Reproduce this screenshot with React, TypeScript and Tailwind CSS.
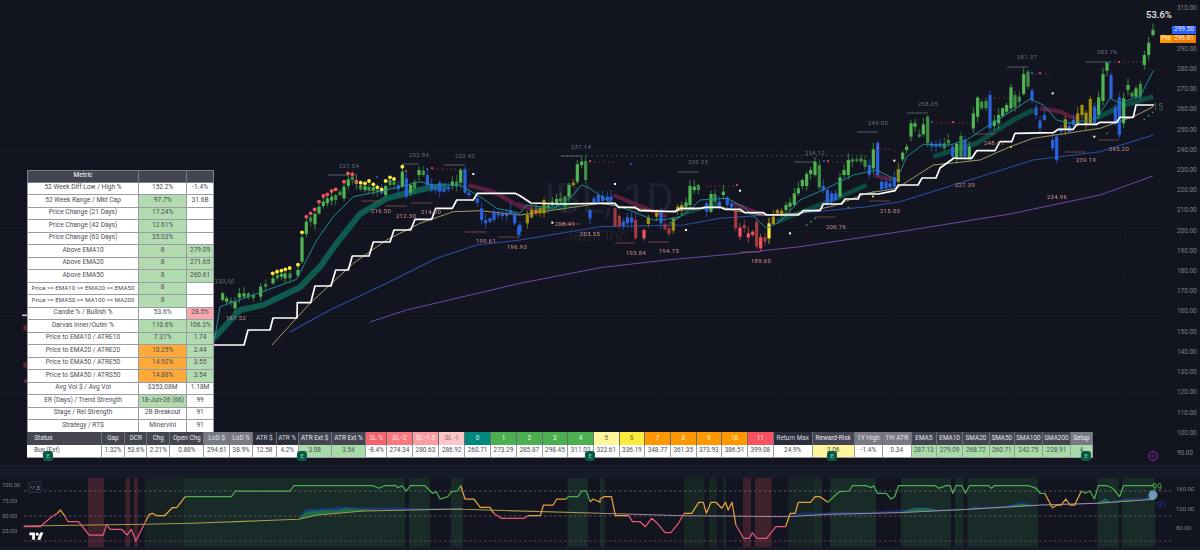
import React from "react";
import { Zap } from "lucide-react";

const P = (ox: number, oy: number, s: string, sx = 3, sy = 3) =>
  s.trim().split(/\s+/).map((p) => {
    const [x, y] = p.split(",").map(Number);
    return `${(ox + x / sx).toFixed(1)},${(oy + y / sy).toFixed(1)}`;
  }).join(" ");

const COL: Record<string, string> = {
  g: "#4fb553", d: "#3f9043", b: "#2b63de", r: "#f7525f", m: "#a33b42", o: "#a3900f", y: "#ffeb3b", a: "#e0702a",
};

type C = { x: number; t: number; b: number; c: string };
const parseC = (ox: number, oy: number, s: string): C[] =>
  s.trim().split(/\s+/).map((p) => {
    const [x, t, b, c] = p.split(",");
    return { x: ox + +x / 3, t: oy + +t / 3, b: oy + +b / 3, c };
  });

const candles: C[] = [
  ...parseC(220, 130, `8,490,510,g 20,505,515,g 33,512,518,d 45,515,535,g 58,490,503,g 72,490,500,g 85,490,502,d 100,495,505,d 122,470,500,g 137,462,470,d 159,445,460,g 172,435,445,d 184,432,440,g 195,430,445,g 210,430,445,d 234,420,437,g 246,322,395,g 259,275,312,g 272,262,275,d 285,252,283,g 297,230,250,g 310,215,228,g 322,205,220,g 335,200,212,g 347,195,210,d 360,185,195,d 372,170,205,g 385,148,168,g 397,140,150,d 409,150,162,g 422,165,178,d 435,168,180,g 447,170,182,d 460,172,182,g 472,180,185,d 485,182,190,b 497,168,195,g 510,150,165,d 522,155,165,d 535,165,178,b 547,125,170,g 559,145,200,b 572,165,188,g 584,155,175,d 597,120,135,g 610,122,135,d 622,135,165,b 635,165,178,b 647,170,178,b 659,158,185,b 672,175,185,b 685,170,178,b 697,155,168,g 710,155,170,d 722,120,158,g 735,118,188,b 747,188,195,b 772,205,218,b 785,235,270,b 797,270,280,b 810,265,275,b 822,245,270,b 835,250,256,b 847,252,258,b 860,252,258,b 872,240,250,b 884,250,280,b 896,290,315,b`),
  ...parseC(520, 130, `0,285,305,b 22,255,280,o 35,240,262,o 48,240,250,a 60,235,250,o 72,210,250,o 85,225,235,d 97,215,225,g 110,207,220,g 122,205,215,d 135,200,230,d 147,165,200,g 160,158,165,o 172,103,155,g 185,95,105,g 197,93,150,d 210,240,265,b 222,205,218,b 235,195,215,b`),
  ...parseC(600, 100, `8,287,303,b 22,290,300,b 33,290,302,b 45,325,378,m 58,348,378,m 70,365,378,b 82,352,370,b 95,352,368,b 107,360,415,m 132,390,415,r 145,352,372,o 170,338,350,o 183,335,370,b 195,373,388,m 207,385,402,m 220,355,392,o 233,320,332,o 245,315,330,o 258,307,320,g 270,258,315,g 283,260,270,g 295,255,270,d 320,310,335,b 333,282,335,g 345,282,305,d 358,305,318,b 370,275,285,g 382,292,315,b 395,310,322,b 407,330,385,m 420,383,410,r 433,375,385,m 445,400,412,r 458,395,405,r 470,365,440,m 482,412,445,r 495,412,425,m 507,370,415,y 520,350,372,o 532,330,340,o 545,332,342,o 558,315,330,g 570,308,320,g 583,280,315,g 595,265,280,g 607,240,258,g 620,222,258,g 632,210,222,g 645,185,225,g 658,195,262,d 670,258,270,b 682,270,308,b 695,280,305,b 707,280,300,b 720,232,290,g 732,210,225,g 745,180,225,g 757,178,185,d 770,178,183,d 783,175,185,d 795,180,200,d 808,195,225,b 820,148,205,g 833,128,225,b 845,245,268,b 858,245,265,b 870,250,262,b 883,232,260,b 895,208,245,o`),
  ...parseC(900, 0, `8,458,478,g 20,440,450,g 33,370,410,g 45,370,380,g 58,403,410,d 70,373,403,g 83,350,430,d 95,430,440,b 108,433,440,b 120,430,440,b 133,430,445,d 145,420,430,d 158,440,470,b 170,432,475,g 183,408,470,d 195,420,470,b 208,440,475,g 220,340,385,g 233,293,350,g 245,305,325,d 258,303,325,d 270,285,385,b 283,362,378,g 296,345,370,g 308,325,348,g 320,315,335,g 333,262,325,g 345,285,322,d 358,290,305,d 371,222,282,g 384,215,260,d 396,272,300,b 408,322,345,b 420,362,385,b 433,345,360,b 458,420,445,b 470,410,480,b 483,385,395,b 496,358,390,o 508,378,395,b 520,360,375,b 533,340,370,o 546,315,345,o 558,338,375,o 571,297,370,o 584,320,370,b 596,292,345,g 609,222,303,g 621,188,212,g 633,225,295,b 646,322,370,b 658,292,405,b 671,295,370,g 684,255,270,g 696,278,290,d 708,265,290,g 721,252,290,d 733,165,195,g 746,128,165,g 759,90,105,g`),
];

const dots = (ox: number, oy: number, s: string) =>
  s.trim().split(/\s+/).map((p) => {
    const [x, y] = p.split(",").map(Number);
    return [ox + x / 3, oy + y / 3];
  });

const yellowDots = dots(220, 130, "158,430 171,425 184,422 196,418 209,414 234,404 246,307 422,158 435,160 447,153 460,163 472,172 485,178 497,153 510,142 522,147 547,110");
const redDots = dots(220, 130, "259,260 272,250 284,238 297,215 310,198 322,193 335,183 347,178 372,155 384,130 397,133 409,155");
const whiteDots = [...dots(220, 130, "760,132"), ...dots(600, 100, "45,252 258,390 420,272 570,400 883,182"), ...dots(520, 130, "285,162 97,278"), ...dots(900, 0, "458,280 583,410")];
const greenDots = [...dots(900, 0, "733,358 746,347 758,337 621,400"), ...dots(600, 100, "620,375 633,365 645,355 745,322 820,275")];

const grayLevels = [[328, 175, 348], [402, 164, 419], [444, 165, 465], [561, 156, 581], [678, 172, 699], [794, 162, 815], [857, 132, 878], [907, 113, 928], [1007, 67, 1028], [1086, 62, 1107]];
const pinkLevels = [[361, 201, 382], [386, 206, 407], [411, 203, 432], [465, 232, 486], [498, 237, 519], [560, 224, 581], [615, 243, 635], [648, 242, 669], [740, 252, 760], [815, 217, 836], [869, 201, 890], [974, 134, 995], [1065, 152, 1086], [1098, 140, 1119]];
const redDash = [[433, 169, 473], [590, 162, 613], [706, 186, 737], [828, 162, 853], [880, 149, 893], [936, 123, 972], [990, 98, 1010], [1032, 74, 1050], [1110, 62, 1142]];

const topLabels: [string, number, number][] = [["227.54", 349, 168], ["232.84", 419, 157], ["232.42", 465, 158], ["237.14", 581, 149], ["229.23", 698, 164], ["234.12", 815, 155], ["249.00", 878, 125], ["258.05", 928, 106], ["281.37", 1027, 59], ["283.76", 1107, 54], ["120.90", 224.5, 283]];
const lowLabels: [string, number, number][] = [["161.52", 236, 320], ["216.50", 381, 213], ["212.30", 406, 218], ["214.00", 431, 214], ["199.61", 486, 243], ["196.93", 517, 249], ["208.41", 565, 226], ["203.55", 590, 236], ["193.84", 636, 255], ["194.75", 669, 253], ["189.60", 761, 263], ["206.76", 836, 229], ["215.00", 890, 213], ["248.41", 994, 145], ["227.39", 965, 187], ["234.96", 1057, 199], ["239.19", 1086, 162], ["245.20", 1119, 151]];

const white = "214,345 244,345 248,330 270,330 273,318 297,318 " +
  P(220, 130, "232,518 272,518 285,468 333,468 347,420 385,420 397,378 447,378 460,336 510,336 522,300 572,300 585,268 635,268 647,235 697,235 710,210 760,210 772,190 885,190 900,197") +
  " 531,203 560,204 " + P(600, 100, "0,310 45,310 55,322 105,322 120,332 225,335 240,325 300,325 315,322 360,322 375,328 420,328 435,338 490,338 500,345 595,345 610,332 660,332 670,312 725,312 735,297 775,297 780,282 835,282 885,272 895,255 900,255") +
  " 918,185 922,178 936,178 940,168 954,158 " + P(900, 0, "170,475 215,475 230,452 285,452 300,425 335,425 345,400 460,398 475,388 520,388 530,373 590,373 600,367 650,367 660,352 700,352 708,315 762,315");

const teal = "214,343 " + P(220, 130, "0,530 100,495 230,448 290,330 340,260 400,200 500,180 600,155 640,165 720,165 780,200 830,235 900,250") + " " +
  P(520, 130, "20,225 100,235 150,205 185,165 210,175 250,205 300,230 340,245 400,270 440,268 480,260") + " " +
  P(600, 100, "210,370 250,345 300,300 380,295 430,320 500,385 540,365 600,300 680,265 760,225 830,210 890,240") + " " +
  P(900, 0, "20,470 70,433 150,435 200,420 265,377 340,330 390,297 430,315 470,360 510,370 590,355 630,295 660,310 700,295 720,290 760,212");

const yellowLine = "272,345 " + P(220, 130, "270,520 400,400 500,330 600,280 700,245 780,242 900,255") + " " +
  P(600, 100, "0,310 100,325 200,335 360,320 420,335 490,345 600,340 700,318 800,280 890,265") + " " +
  P(900, 0, "100,495 240,480 330,440 400,415 500,400 600,385 700,350 760,320");
const blueLine = "290,332 " + P(220, 130, "330,540 500,460 650,385 770,345 900,330") + " " +
  P(600, 100, "0,380 100,378 250,375 360,355 500,345 600,340 700,330 800,320 900,305") + " " +
  P(900, 0, "400,480 600,455 760,405");
const purpleLine = "370,322 " + P(220, 130, "560,540 900,460") + " " + P(600, 100, "0,503 200,480 400,462 600,440 800,410 900,395") + " 1010,214 1100,195 1153,176";

const prices = [310, 300, 290, 280, 270, 260, 250, 240, 230, 220, 210, 200, 190, 180, 170, 160, 150, 140, 130, 120, 110, 100, 90];

const metricRows: [string, string, string, string?, string?][] = [
  ["52 Week Diff Low / High %", "152.2%", "-1.4%"],
  ["52 Week Range / Mkt Cap", "97.7%", "31.6B", "bg-[#b2dcb0]"],
  ["Price Change (21 Days)", "17.24%", "", "bg-[#b2dcb0]"],
  ["Price Change (42 Days)", "12.61%", "", "bg-[#b2dcb0]"],
  ["Price Change (63 Days)", "35.03%", "", "bg-[#b2dcb0]"],
  ["Above EMA10", "8", "279.09", "bg-[#b2dcb0]", "bg-[#b2dcb0]"],
  ["Above EMA20", "8", "271.65", "bg-[#b2dcb0]", "bg-[#b2dcb0]"],
  ["Above EMA50", "8", "260.61", "bg-[#b2dcb0]", "bg-[#b2dcb0]"],
  ["Price >= EMA10 >= EMA20 >= EMA50", "8", "", "bg-[#b2dcb0]"],
  ["Price >= EMA50 >= MA100 >= MA200", "8", "", "bg-[#b2dcb0]"],
  ["Candle % / Bullish %", "53.6%", "28.5%", "", "bg-[#f7a9ad]"],
  ["Darvas Inner/Outer %", "110.6%", "106.3%", "bg-[#b2dcb0]", "bg-[#b2dcb0]"],
  ["Price to EMA10 / ATRE10", "7.31%", "1.74", "bg-[#b2dcb0]", "bg-[#b2dcb0]"],
  ["Price to EMA20 / ATRE20", "10.25%", "2.44", "bg-[#ffa93a]", "bg-[#b2dcb0]"],
  ["Price to EMA50 / ATRE50", "14.92%", "3.55", "bg-[#ffa93a]", "bg-[#b2dcb0]"],
  ["Price to SMA50 / ATRS50", "14.88%", "3.54", "bg-[#ffa93a]", "bg-[#b2dcb0]"],
  ["Avg Vol $ / Avg Vol", "$353.08M", "1.18M"],
  ["ER (Days) / Trend Strength", "18-Jun-26 (66)", "99", "bg-[#b2dcb0]"],
  ["Stage / Rel Strength", "2B Breakout", "91"],
  ["Strategy / RTS", "Minervini", "91"],
];

const D = "bg-[#434651] text-[#e6e7ea]";
const K = "bg-[#2a2e39] text-[#d8dae0]";
const L = "bg-[#787b86] text-[#e6e7ea]";
const G = "bg-[#4caf50] text-[#e9f5e9]";
const O = "bg-[#ff9800] text-[#fff2dc]";
const V = "bg-[#a9dba9]";
const bottomCols: { h: string; v: string; w: string; hc: string; vc?: string; left?: boolean }[] = [
  { h: "Status", v: "Buy (Ext)", w: "w-[74.4px]", hc: D, left: true },
  { h: "Gap", v: "1.32%", w: "w-[23.6px]", hc: D },
  { h: "DCR", v: "53.6%", w: "w-[22px]", hc: D },
  { h: "Chg", v: "2.21%", w: "w-[23px]", hc: D },
  { h: "Open Chg", v: "0.88%", w: "w-[34px]", hc: D },
  { h: "LoD $", v: "294.61", w: "w-[26px]", hc: L },
  { h: "LoD %", v: "38.9%", w: "w-[22.7px]", hc: L },
  { h: "ATR $", v: "12.58", w: "w-[23.7px]", hc: K },
  { h: "ATR %", v: "4.2%", w: "w-[22px]", hc: K },
  { h: "ATR Ext $", v: "3.08", w: "w-[33px]", hc: D, vc: V },
  { h: "ATR Ext %", v: "3.54", w: "w-[34.6px]", hc: D, vc: V },
  { h: "SL %", v: "-8.4%", w: "w-[21px]", hc: "bg-[#f7626c] text-[#ffe3e5]" },
  { h: "SL -2", v: "274.34", w: "w-[25.4px]", hc: "bg-[#f9797f] text-[#ffe3e5]" },
  { h: "SL -1.5", v: "280.63", w: "w-[26.6px]", hc: "bg-[#fa9ea2] text-[#fff0f0]" },
  { h: "SL -1", v: "286.92", w: "w-[26px]", hc: "bg-[#fcc5c8] text-[#8a6a6d]" },
  { h: "0", v: "260.71", w: "w-[25.7px]", hc: "bg-[#00897b] text-[#dff3f0]" },
  { h: "1", v: "273.29", w: "w-[26px]", hc: G },
  { h: "2", v: "285.87", w: "w-[25.7px]", hc: G },
  { h: "3", v: "298.45", w: "w-[25.6px]", hc: G },
  { h: "4", v: "311.03", w: "w-[25.7px]", hc: G },
  { h: "5", v: "323.61", w: "w-[25.7px]", hc: "bg-[#fff59d] text-[#6b6630]" },
  { h: "6", v: "336.19", w: "w-[25.6px]", hc: "bg-[#ffeb3b] text-[#6b6318]" },
  { h: "7", v: "348.77", w: "w-[25.7px]", hc: O },
  { h: "8", v: "361.35", w: "w-[25.7px]", hc: O },
  { h: "9", v: "373.93", w: "w-[25.6px]", hc: O },
  { h: "10", v: "386.51", w: "w-[25.7px]", hc: O },
  { h: "11", v: "399.08", w: "w-[26px]", hc: "bg-[#f7525f] text-[#ffe3e5]" },
  { h: "Return Max", v: "24.9%", w: "w-[38.7px]", hc: K },
  { h: "Reward-Risk", v: "3.06", w: "w-[42.3px]", hc: D, vc: "bg-[#fff59d]" },
  { h: "1Y High", v: "-1.4%", w: "w-[28.3px]", hc: L },
  { h: "1Yr ATR", v: "0.34", w: "w-[28.4px]", hc: L },
  { h: "EMA5", v: "287.13", w: "w-[25.6px]", hc: D, vc: V },
  { h: "EMA10", v: "279.09", w: "w-[26px]", hc: D, vc: V },
  { h: "SMA20", v: "268.72", w: "w-[26.7px]", hc: D, vc: V },
  { h: "SMA50", v: "260.71", w: "w-[25px]", hc: D, vc: V },
  { h: "SMA100", v: "242.75", w: "w-[28.3px]", hc: D, vc: V },
  { h: "SMA200", v: "228.91", w: "w-[27.7px]", hc: D, vc: V },
  { h: "Setup", v: "4", w: "w-[22.3px]", hc: L, vc: V },
];

const greenZones = [[145, 184, 0.1], [184, 405, 0.17], [409, 430, 0.17], [451, 463, 0.17], [567.5, 588, 0.17], [600, 604.6, 0.17], [684, 704.5, 0.12], [709, 717, 0.12], [723, 726, 0.12], [788, 813.5, 0.1], [813.5, 822, 0.17], [830, 876, 0.17], [901, 951, 0.17], [955, 963.5, 0.17], [967.4, 1038, 0.17], [1097.5, 1118.5, 0.17], [1122, 1155, 0.17]];
const redZones = [[88, 104], [125.5, 130], [134, 138], [743, 751], [755, 771.5]];

const I0 = (s: string) => P(0, 465, s, 2.613, 3);
const I1 = (s: string) => P(600, 465, s, 2.613, 3);
const segs: [string, string][] = [
  ["#e8587a", I0("62,185 105,185 135,155 150,145")],
  ["#e9a23b", I0("150,145 158,135 170,155")],
  ["#e8587a", I0("170,155 178,170 205,170 233,210 270,210 278,178 288,193 318,193 332,210 343,193 355,228 380,170")],
  ["#e9a23b", I0("380,170 390,148 398,145 410,152 430,152 450,128 462,128 484,95")],
  ["#4caf50", I0("484,95 605,95 615,78 758,78 768,62 975,62 990,70 1005,62 1035,62 1040,68 1050,62 1062,78 1072,62 1110,62 1130,85 1140,80 1150,102 1170,95 1180,80 1195,78 1204,62")],
  ["#e9a23b", I0("1204,62 1215,102 1238,102 1255,127 1280,127 1290,145")],
  ["#e8587a", I0("1290,145 1310,160 1370,160 1380,152")],
  ["#e9a23b", I0("1380,152 1412,152 1420,120 1445,120 1455,102 1480,102")],
  ["#4caf50", I0("1480,102 1485,95 1510,95 1520,78 1532,78 1542,110")],
  ["#e9a23b", I0("1542,110 1550,102 1568,112") + " " + I1("0,102 10,95 30,95 40,152 75,152")],
  ["#e8587a", I1("75,152 85,170 105,170 118,185 135,160 150,175 170,203 185,203 205,175 220,145")],
  ["#e9a23b", I1("220,145 240,145 258,112 270,112 278,145 290,112 303,112 318,130 328,112 335,135 345,112 355,180")],
  ["#e8587a", I1("355,180 375,220 390,220 398,203 410,220 435,220 460,185 485,185")],
  ["#e9a23b", I1("485,185 497,145 510,145 518,112 550,112 562,95 575,95 595,112")],
  ["#4caf50", I1("595,112 625,80 650,78 660,62 695,62 708,68 715,62 725,85 748,85 760,102 770,95 780,62 875,62 885,70 905,62 915,62 922,85 930,62 945,62 955,85 965,62 1015,62 1023,70 1030,62 1120,62 1140,70 1150,85 1162,85")],
  ["#e9a23b", I1("1162,85 1182,128 1195,120 1205,120 1217,102 1228,120 1240,120 1258,78")],
  ["#4caf50", I1("1258,78 1268,85 1280,78 1292,102 1302,62 1325,62 1340,70 1358,95 1368,62 1448,62")],
];

export default function App() {
  return (
    <div className="flex h-[550px] w-[1200px] flex-col overflow-hidden bg-[#12151f] font-['Roboto','Liberation_Sans',sans-serif]">
      {/* main price pane */}
      <div className="relative flex h-[465px] w-full">
        <svg className="absolute inset-0 h-[465px] w-[1200px] blur-[0.3px]" viewBox="0 0 1200 465">
          {prices.filter((p) => p % 20 === 0).map((p) => {
            const y = 9 + (310 - p) * 2.023;
            return <line key={p} x1="0" x2="1165" y1={y} y2={y} stroke="#181c28" strokeWidth="1" />;
          })}
          {[310, 430, 545, 660, 780, 895, 1010, 1125].map((x) => (
            <line key={x} x1={x} x2={x} y1="0" y2="465" stroke="#171b26" strokeWidth="1" />
          ))}
          <text x="603" y="213" textAnchor="middle" fontSize="42" fill="#1f2330" fontFamily="Roboto, sans-serif">JBL, 1D</text>
          <text x="598" y="241" textAnchor="middle" fontSize="17" fill="#1f2330" fontFamily="Roboto, sans-serif">Jabil Inc.</text>

          {/* ribbons */}
          <polyline fill="none" stroke="#0e5a4e" strokeWidth="6" points={"214,338 " + P(220, 130, "60,540 130,525 240,472 300,410 350,340 420,252 500,205 620,175 680,168")} />
          <polyline fill="none" stroke="#5a1f40" strokeWidth="4" points={P(220, 130, "745,165 820,185 900,230") + " " + P(520, 130, "0,225 40,240")} />
          <polyline fill="none" stroke="#0f4540" strokeWidth="4" points={P(520, 130, "40,240 120,230 170,220")} />
          <polyline fill="none" stroke="#5a1f40" strokeWidth="4" points={P(600, 100, "40,285 100,310 200,350")} />
          <polyline fill="none" stroke="#0f4540" strokeWidth="3" points={P(600, 100, "240,345 310,325 360,310")} />
          <polyline fill="none" stroke="#5a1f40" strokeWidth="4" points={P(600, 100, "400,310 490,345")} />
          <polyline fill="none" stroke="#0d4a42" strokeWidth="4.5" points={P(600, 100, "530,365 620,330 720,290 800,255")} />
          <polyline fill="none" stroke="#5a1f40" strokeWidth="4" points={P(600, 100, "820,225 880,240")} />
          <polyline fill="none" stroke="#0d4a42" strokeWidth="5" points={P(900, 0, "100,470 230,430 340,360 400,330")} />
          <polyline fill="none" stroke="#5a1f40" strokeWidth="4" points={P(900, 0, "420,325 480,335 530,358")} />
          <polyline fill="none" stroke="#0d4a42" strokeWidth="5" points={P(900, 0, "590,355 660,320 760,290")} />

          {/* moving averages */}
          <polyline fill="none" stroke="#6a4aa8" strokeWidth="1" points={purpleLine} />
          <polyline fill="none" stroke="#2a4fa8" strokeWidth="1.1" points={blueLine} />
          <polyline fill="none" stroke="#b3a866" strokeWidth="0.9" points={yellowLine} />

          {/* level lines */}
          <line x1="561" x2="870" y1="155.7" y2="155.7" stroke="#5a5e68" strokeWidth="0.7" strokeDasharray="2 3" />
          <line x1="215" x2="235" y1="283.5" y2="283.5" stroke="#5a5e68" strokeWidth="0.7" strokeDasharray="2 3" />
          {grayLevels.map(([a, y, b]) => <line key={a} x1={a} x2={b} y1={y} y2={y} stroke="#6b6f78" strokeWidth="0.8" />)}
          {pinkLevels.map(([a, y, b]) => <line key={a} x1={a} x2={b} y1={y} y2={y} stroke="#8a5258" strokeWidth="0.8" />)}
          {redDash.map(([a, y, b]) => <line key={a} x1={a} x2={b} y1={y} y2={y} stroke="#b33c48" strokeWidth="0.9" strokeDasharray="1.2 3.2" />)}

          {/* candles */}
          {candles.map((c, i) => {
            const up = 1.5 + ((i * 7) % 6);
            const dn = 1.5 + ((i * 11) % 5);
            return (
              <g key={i}>
                <line x1={c.x} x2={c.x} y1={c.t - up} y2={c.b + dn} stroke={COL[c.c]} strokeWidth="0.7" />
                <rect x={c.x - 1.6} y={c.t} width="3.2" height={Math.max(c.b - c.t, 1)} fill={COL[c.c]} />
              </g>
            );
          })}
          <polyline fill="none" stroke="#1f8a96" strokeWidth="1" points={teal} />
          <polyline fill="none" stroke="#ffffff" strokeWidth="1.7" points={white} strokeLinejoin="round" />

          {/* markers */}
          {yellowDots.map(([x, y], i) => <circle key={i} cx={x} cy={y} r="1.9" fill="#ffeb3b" />)}
          {redDots.map(([x, y], i) => <circle key={i} cx={x} cy={y} r="1.9" fill="#f7525f" />)}
          {whiteDots.map(([x, y], i) => <rect key={i} x={x - 1} y={y - 1} width="2" height="2" fill="#ffffff" />)}
          {greenDots.map(([x, y], i) => <circle key={i} cx={x} cy={y} r="0.9" fill="#2e9e5b" />)}
          <circle cx="873" cy="196.5" r="1" fill="#ffeb3b" />
          <circle cx="1011" cy="147" r="0.9" fill="#ffeb3b" />
          {[[377, 177], [427, 169], [932, 122], [631, 164], [990, 97], [1032, 73], [1110, 62], [824, 161]].map(([x, y], i) => (
            <circle key={i} cx={x} cy={y} r="1" fill="#2b63de" />
          ))}
          {[[406, 171], [432, 168], [590, 161], [737, 185], [828, 161], [878, 148], [953, 122], [1040, 73], [1119, 62]].map(([x, y], i) => (
            <circle key={i} cx={x} cy={y} r="1" fill="#f7525f" />
          ))}
          {/* marks at the left edge */}
          <rect x="22" y="314.5" width="5" height="1.6" fill="#c9ccd2" />
          <circle cx="26" cy="328" r="3" fill="#5c2233" />
          <circle cx="26" cy="365" r="3" fill="#5c2233" />
          <circle cx="26" cy="381" r="2" fill="#6a2a3a" />

          {topLabels.map(([t, x, y]) => <text key={t} x={x} y={y} textAnchor="middle" fontSize="6" letterSpacing="0.3" fill="#6e727c">{t}</text>)}
          {lowLabels.map(([t, x, y]) => <text key={t} x={x} y={y} textAnchor="middle" fontSize="6" letterSpacing="0.3" fill="#d98f92">{t}</text>)}
          <text x="1158" y="110" textAnchor="middle" fontSize="9" fill="#4c6b4c">15</text>
        </svg>

        {/* metric table */}
        <div className="absolute left-[27.3px] top-[170px] z-10 flex w-[186.4px] flex-col text-[6.6px] text-[#4a4d55]">
          <div className="flex h-[12.7px] border border-[#7b7e86] bg-[#434651] font-medium text-[#dfe0e4]">
            <div className="flex w-[110.5px] items-center justify-center border-r border-[#7b7e86]">Metric</div>
            <div className="w-[48.7px] border-r border-[#7b7e86]"></div>
            <div className="flex-1"></div>
          </div>
          {metricRows.map(([a, b, c, bc, cc]) => (
            <div key={a} className="flex h-[12.5px] border-b border-l border-r border-[#9a9ca3] bg-white">
              <div className={`flex w-[110.5px] items-center justify-center whitespace-nowrap border-r border-[#9a9ca3] ${a.includes(">=") ? "text-[6.2px]" : ""}`}>{a}</div>
              <div className={`flex w-[48.7px] items-center justify-center whitespace-nowrap border-r border-[#9a9ca3] ${bc ?? ""}`}>{b}</div>
              <div className={`flex flex-1 items-center justify-center whitespace-nowrap ${cc ?? ""}`}>{c}</div>
            </div>
          ))}
        </div>

        {/* bottom stats table */}
        <div className="absolute left-[27.3px] top-[432px] z-10 flex flex-col text-[6.4px]">
          <div className="flex h-[13.4px]">
            {bottomCols.map((c) => (
              <div key={c.h} className={`flex ${c.w} shrink-0 items-center whitespace-nowrap border-r border-[#6b6e77] ${c.left ? "justify-start pl-[7px]" : "justify-center"} ${c.hc}`}>{c.h}</div>
            ))}
          </div>
          <div className="flex h-[12.6px] text-[#4a4d55]">
            {bottomCols.map((c) => (
              <div key={c.h} className={`flex ${c.w} shrink-0 items-center whitespace-nowrap border-r border-b border-[#9a9ca3] ${c.left ? "justify-start pl-[7px]" : "justify-center"} ${c.vc ?? "bg-white"}`}>{c.v}</div>
            ))}
          </div>
        </div>

        {/* earnings markers over the stats row */}
        {["left-[43px]", "left-[297px]", "left-[585px]", "left-[827px]", "left-[1081px]"].map((p) => (
          <div key={p} className={`absolute top-[451px] z-20 flex h-[10px] w-[10px] items-center justify-center rounded-[3px] bg-[#0b5a46] text-[5.5px] text-[#8fd4b8] ${p}`}>E</div>
        ))}
        <div className="absolute left-[1148px] top-[451px] flex h-[10px] w-[10px] items-center justify-center rounded-full border border-[#9c27b0] text-[#9c27b0]">
          <Zap size={6} strokeWidth={2} />
        </div>

        {/* price axis; 300.00 sits behind the price tags */}
        <div className="relative ml-auto flex w-[35px] flex-col pl-[12px] text-[6.4px] text-[#7f838d]">
          <div className="-mt-[1.1px]"></div>
          {prices.map((p) => (
            <div key={p} className="flex h-[20.23px] shrink-0 items-center">{p === 300 ? "" : `${p}.00`}</div>
          ))}
        </div>
        <div className="absolute left-[1146px] top-[10px] z-10 text-[9.5px] font-medium leading-none text-[#e8e9ec]">53.6%</div>
        <div className="absolute left-[1172px] top-[26px] flex h-[8px] w-[24px] items-center justify-center bg-[#2962ff] text-[6.4px] text-[#e6ecff]">299.50</div>
        <div className="absolute left-[1160px] top-[34.5px] flex h-[8px] items-center text-[6.4px] text-[#fff2dc]">
          <div className="flex h-full w-[12px] items-center justify-center bg-[#ff9800]">Pre</div>
          <div className="flex h-full w-[24px] items-center justify-center bg-[#f57c00]">296.01</div>
        </div>
      </div>

      <div className="h-[13px] bg-[#171b27]"></div>

      {/* indicator pane */}
      <div className="relative h-[69px]">
        <svg className="absolute inset-0 h-[69px] w-[1200px] blur-[0.3px]" viewBox="0 478 1200 69">
          {greenZones.map(([a, b, o]) => <rect key={a} x={a} y="478" width={b - a} height="69" fill="#3f9a56" fillOpacity={o} />)}
          {redZones.map(([a, b]) => <rect key={a} x={a} y="478" width={b - a} height="69" fill="#b0404a" fillOpacity="0.28" />)}
          {[[491, "#6b6e76"], [516, "#7a5e6e"], [541, "#7a4c62"]].map(([y, c]) => (
            <line key={y as number} x1="24" x2="1172" y1={y as number} y2={y as number} stroke={c as string} strokeWidth="0.8" strokeDasharray="2.5 2.5" />
          ))}
          <polygon fill="#1c3fa0" fillOpacity="0.7" points={I0("780,163 796,133 860,128 900,125 950,128 1050,128 1204,130 1204,134 950,136 830,150")} />
          <polygon fill="#1b7a3e" fillOpacity="0.85" points={I0("780,163 800,140 860,134 880,137 900,130 950,133 1000,136 950,138 830,150")} />
          <polygon fill="#1c3fa0" fillOpacity="0.6" points={I1("480,152 540,142 560,144 640,140 700,141 800,134 820,126 850,126 880,133 960,132 975,122 1000,126 1060,122 1100,110 1140,120 1300,112 1320,98 1335,108 1370,100 1420,100 1448,84 1448,103 1300,115 1150,122 960,135 780,145 600,150")} />
          <polygon fill="#1b7a3e" fillOpacity="0.85" points={I1("790,142 820,130 850,130 880,135 960,134 985,128 1000,130 1060,126 1100,116 1140,122 1300,114 1320,102 1335,111 1370,104 1420,104 1448,94 1448,103 1300,116 1150,122 960,135")} />
          <polyline fill="none" stroke="#a89a4a" strokeWidth="1.1" points={I0("62,183 380,178 500,175 780,163 830,150 950,138 1204,132") + " " + I0("1210,133 1568,145")} />
          <polyline fill="none" stroke="#a08a9a" strokeWidth="1" points={I1("0,145 220,152 490,155 600,148 780,143 960,133 1150,120 1300,115 1448,103")} />
          {segs.map(([c, p], i) => <polyline key={i} fill="none" stroke={c} strokeWidth="1.25" points={p} strokeLinejoin="round" />)}
          <circle cx="1153" cy="495" r="4.5" fill="#7fb3d5" fillOpacity="0.8" />
          <text x="1152" y="490" fontSize="9" fill="#4caf50">99</text>
          <text x="1157" y="508" fontSize="9" fill="#1a2e9e">91</text>
          {[["100.00", 487], ["75.00", 503], ["50.00", 518], ["25.00", 533]].map(([t, y]) => (
            <text key={t} x="2" y={y as number} fontSize="6" fill="#7f838d">{t}</text>
          ))}
          {[["160.00", 491], ["120.00", 511], ["80.00", 530]].map(([t, y]) => (
            <text key={t} x="1176" y={y as number} fontSize="6" fill="#7f838d">{t}</text>
          ))}
        </svg>
        <div className="absolute left-[28px] top-[3px] flex h-[12px] w-[14px] items-center justify-center gap-[1px] rounded-[2px] border border-[#2a2e39] bg-[#171b27] text-[6px] text-[#a0a3ab]">
          <svg viewBox="0 0 8 8" className="h-[5px] w-[5px]"><path d="M1 2.5 4 5.5 7 2.5" fill="none" stroke="#a0a3ab" strokeWidth="1" /></svg>
          <span>3</span>
        </div>
        <svg viewBox="0 0 36 28" className="absolute left-[29px] top-[53px] h-[11px] w-[15px]" fill="#ffffff">
          <path d="M14 22H7V11H0V4h14v18zM28 22h-8l7.5-18h8L28 22z" />
          <circle cx="20" cy="8" r="4" />
        </svg>
      </div>

      <div className="h-[3px] bg-[#171b27]"></div>
    </div>
  );
}
